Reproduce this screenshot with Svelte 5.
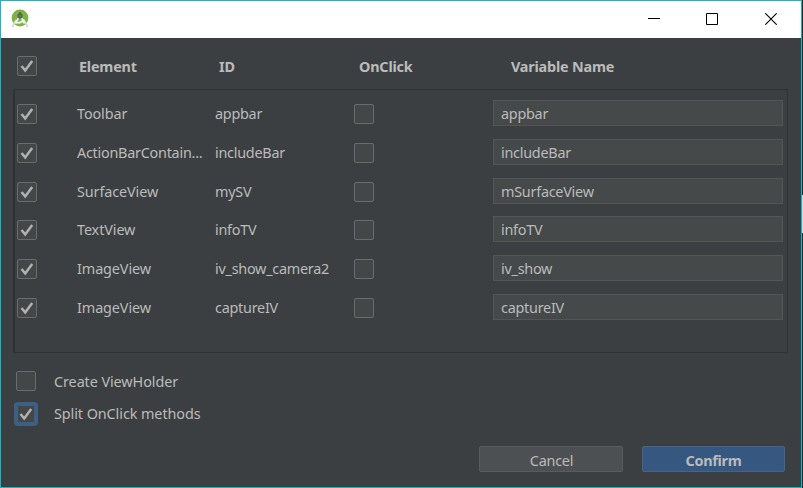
<script>
  const rows = [
    ['Toolbar', 'appbar', 'appbar'],
    ['ActionBarContain...', 'includeBar', 'includeBar'],
    ['SurfaceView', 'mySV', 'mSurfaceView'],
    ['TextView', 'infoTV', 'infoTV'],
    ['ImageView', 'iv_show_camera2', 'iv_show'],
    ['ImageView', 'captureIV', 'captureIV']
  ];
</script>

{#snippet box(checked, focused = false)}
  <span class="check" class:focused role="checkbox" aria-checked={checked} tabindex="-1">
    {#if checked}
      <svg width="20" height="20" viewBox="0 0 20 20"><path d="M4.5 10 8.2 14.4 15.2 5" fill="none" stroke="#b0b1b2" stroke-width="2.5" /></svg>
    {/if}
  </span>
{/snippet}

<div class="screen">
  <div class="window">
    <header class="titlebar">
      <svg class="logo" width="18" height="20" viewBox="0 0 18 20">
        <circle cx="9" cy="9" r="8.4" fill="#7cb342" />
        <path d="M5 11 1.5 18M13 11l3.5 7" stroke="#d5d8d5" stroke-width="1.8" />
        <path d="M8 8 4.5 14.5M10 8l3.5 6.5M5 13.5q5 1.5 8-3" stroke="#f2f5ee" stroke-width="1.7" fill="none" />
        <path d="M9 3v3" stroke="#546552" stroke-width="2" />
        <circle cx="9" cy="7" r="2.7" fill="#546552" />
        <circle cx="9" cy="7" r=".8" fill="#8aa878" />
      </svg>
      <div class="controls">
        <svg width="12" height="12" viewBox="0 0 12 12"><path d="M0 5.5h12" stroke="#000" /></svg>
        <svg width="12" height="12" viewBox="0 0 12 12"><path d="M.5.5h11v11H.5z" fill="none" stroke="#000" /></svg>
        <svg width="12" height="12" viewBox="0 0 12 12"><path d="m.3.3 11.4 11.4M11.7.3.3 11.7" stroke="#000" stroke-width="1.1" /></svg>
      </div>
    </header>
    <main>
      <div class="head">
        {@render box(true)}
        <b>Element</b><b>ID</b><b>OnClick</b><b>Variable Name</b>
      </div>
      <div class="list">
        {#each rows as [element, id, name]}
          <div class="row">
            {@render box(true)}
            <span class:roomy={element.length < 18}>{element}</span>
            <span>{id}</span>
            {@render box(false)}
            <span class="field">{name}</span>
          </div>
        {/each}
      </div>
      <div class="options">
        <div class="option">{@render box(false)}<span>Create ViewHolder</span></div>
        <div class="option">{@render box(true, true)}<span>Split OnClick methods</span></div>
      </div>
      <footer>
        <button>Cancel</button>
        <button class="primary">Confirm</button>
      </footer>
    </main>
  </div>
  <div class="edge"><i></i></div>
</div>

<style>
  .screen { display: flex; width: 803px; height: 488px; overflow: hidden; color: #bbb; font: 14.4px/20px "Noto Sans", "Open Sans", sans-serif; letter-spacing: -0.25px; white-space: nowrap; }
  .window { width: 802px; height: 488px; box-sizing: border-box; border: 1px solid #19b5c5; background: #3c3f41; }
  .edge { width: 1px; background: #2b2b2b; }
  .edge i { display: block; height: 38px; margin-top: 195px; background: #d6d6d6; }
  .titlebar { height: 37px; background: #fff; display: flex; justify-content: space-between; box-sizing: border-box; padding: 8px 24px 0 10px; }
  .controls { display: flex; gap: 47px; padding-top: 4px; }
  .controls svg { display: block; }
  .controls svg:first-child { margin-right: -1px; }
  .logo { display: block; }
  main { display: flex; flex-direction: column; }
  .head { height: 51px; display: grid; grid-template-columns: 62px 140px 140px 152px 1fr; padding: 18px 0 0 16px; box-sizing: border-box; }
  .head b { line-height: 21px; letter-spacing: -0.2px; }
  .check { width: 20px; height: 20px; box-sizing: border-box; display: block; border: 1px solid #6b6b6b; border-radius: 2px; background: #434748; }
  .check svg { display: block; margin: -1px; }
  .focused { border-color: #3d6185; box-shadow: 0 0 0 2px #3d6185, inset 0 0 0 1px #3d6185; }
  .list { height: 264px; width: 775px; margin-left: 12px; box-sizing: border-box; border: 1px solid #323232; border-left-width: 2px; padding-top: 10px; }
  .row { height: 38.8px; display: grid; grid-template-columns: 60px 138px 139px 139px 290px; padding-left: 2px; line-height: 27px; }
  .row .check { margin-top: 4px; }
  .roomy { letter-spacing: -0.1px; }
  .field { height: 26px; box-sizing: border-box; border: 1px solid #535657; background: #45494a; padding-left: 7px; line-height: 26px; }
  .options { padding: 18px 0 0 15px; height: 82px; box-sizing: border-box; letter-spacing: -0.08px; }
  .option { display: flex; gap: 18px; height: 33px; line-height: 21px; }
  .option + .option span:last-child { line-height: 20px; }
  footer { display: flex; justify-content: flex-end; gap: 19px; padding: 11px 16px 0 0; }
  button { width: 144px; height: 26px; box-sizing: border-box; border: 1px solid #595c5d; border-radius: 2px; background: #4c5052; color: #bbb; font: inherit; letter-spacing: inherit; padding: 3px 0 0 1px; }
  .primary { width: 143px; background: #365880; border-color: #42658b; font-weight: bold; padding-left: 0; }
</style>
